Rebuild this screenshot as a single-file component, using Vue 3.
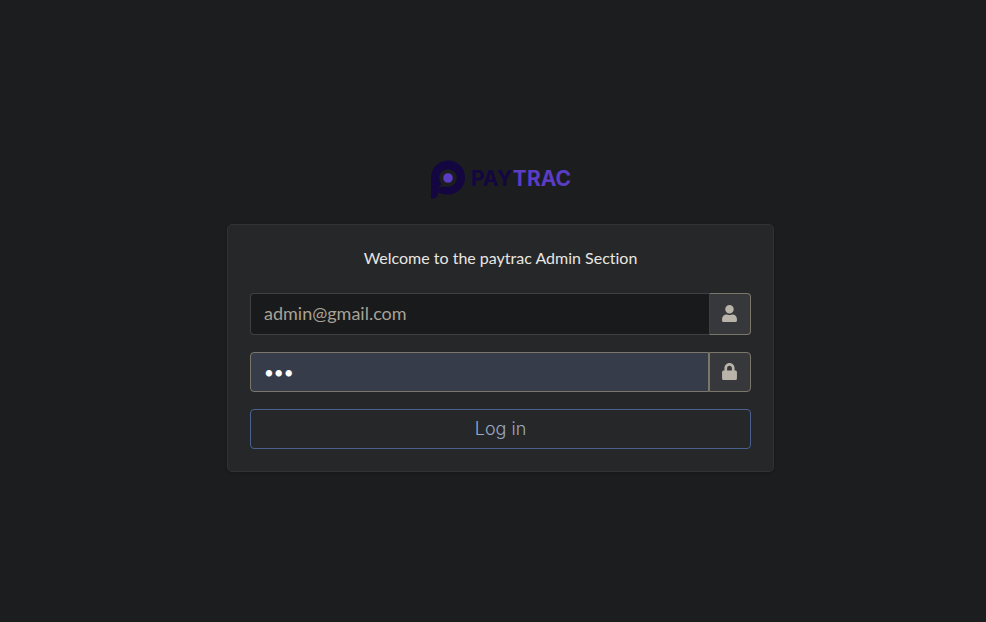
<script setup>
import { ref } from 'vue'

const email = ref('')
const password = ref('123')
</script>

<template>
  <main class="page">
    <div class="login">
      <a class="brand" href="#" aria-label="Paytrac">
        <svg class="logo" viewBox="0 0 140 40" width="140" height="40" aria-hidden="true">
          <path class="ink" fill-rule="evenodd" d="M0 39V18A17 17 0 1 1 17 34.500Q12 34.500 8.500 33Q7 32.500 7 34Q6.500 38.500 0 39ZM7.500 28.500Q9 26.500 12 26.800H17A8.800 8.800 0 1 0 8.200 18Q8.200 21.500 10.500 24.500Q8 25.500 7.500 28.500Z" />
          <circle class="accent" cx="17" cy="18" r="4.800" />
          <text class="word ink" x="40" y="26">PAY</text>
          <text class="word accent" x="140" y="26" text-anchor="end">TRAC</text>
        </svg>
      </a>
      <section class="card">
        <p class="welcome">Welcome to the paytrac Admin Section</p>
        <form class="form" @submit.prevent>
          <div class="group">
            <input v-model="email" class="field" type="email" placeholder="admin@gmail.com" aria-label="Email" />
            <span class="addon">
              <svg class="icon" viewBox="0 0 448 512" aria-hidden="true">
                <path d="M224 256c70.700 0 128-57.300 128-128S294.700 0 224 0 96 57.300 96 128s57.300 128 128 128zm89.600 32h-16.700c-22.200 10.200-46.900 16-72.900 16s-50.600-5.800-72.900-16h-16.700C60.200 288 0 348.200 0 422.400V464c0 26.500 21.500 48 48 48h352c26.500 0 48-21.500 48-48v-41.600c0-74.200-60.200-134.400-134.400-134.400z" />
              </svg>
            </span>
          </div>
          <div class="group">
            <input v-model="password" class="field filled" type="password" aria-label="Password" />
            <span class="addon joined">
              <svg class="icon" viewBox="0 0 448 512" aria-hidden="true">
                <path d="M400 224h-24v-72C376 68.200 307.800 0 224 0S72 68.200 72 152v72H48c-26.500 0-48 21.500-48 48v192c0 26.500 21.500 48 48 48h352c26.500 0 48-21.500 48-48V272c0-26.500-21.500-48-48-48zm-104 0H152v-72c0-39.700 32.300-72 72-72s72 32.300 72 72v72z" />
              </svg>
            </span>
          </div>
          <button class="submit" type="submit">Log in</button>
        </form>
      </section>
    </div>
  </main>
</template>

<style>
body {
  background: #1c1d1e;
}
</style>

<style scoped>
.page {
  box-sizing: border-box;
  min-height: 100vh;
  padding: 10px 0 0 15px;
  display: flex;
  align-items: center;
  justify-content: center;
  background: #1c1d1e;
  font-family: Lato, "Liberation Sans", sans-serif;
}
.login {
  width: 100%;
  max-width: 547px;
}
.brand {
  display: flex;
  justify-content: center;
  margin-bottom: 24px;
}
.logo {
  display: block;
}
.ink {
  fill: #140640;
}
.accent {
  fill: #5b3cc4;
}
.word {
  font: 700 21px Inter, sans-serif;
}
.card {
  padding: 22px;
  border: 1px solid #303234;
  border-radius: 5px;
  background: #262728;
  box-shadow: 0 1px 3px rgba(0, 0, 0, 0.2);
}
.welcome {
  margin: 0 0 24px;
  color: #e8e6e3;
  font-size: 16px;
  font-variant-ligatures: none;
  line-height: 22px;
  text-align: center;
}
.form {
  display: flex;
  flex-direction: column;
  gap: 17px;
}
.group {
  display: flex;
}
.field {
  box-sizing: border-box;
  flex: 1;
  min-width: 0;
  height: 42px;
  padding: 0 13px 2px;
  border: 1px solid #3e4144;
  border-right: 0;
  border-radius: 4px 0 0 4px;
  outline: 0;
  background: #191a1b;
  color: #fff;
  font: 18px Lato, sans-serif;
}
.field::placeholder {
  color: #a8a297;
  opacity: 1;
}
.filled {
  height: 40px;
  padding-bottom: 0;
  border: 1px solid #7b766a;
  background: #373c4a;
  font-size: 17px;
}
.addon {
  box-sizing: border-box;
  width: 42px;
  display: flex;
  align-items: center;
  justify-content: center;
  padding: 0 2px 2px 0;
  border: 1px solid #7b766a;
  border-left-color: #3e4144;
  border-radius: 0 4px 4px 0;
  background: #37383b;
}
.joined {
  border-left-color: #7b766a;
}
.icon {
  width: 15px;
  height: 17px;
  fill: #b9b3aa;
}
.submit {
  height: 40px;
  padding: 0 12px 2px;
  border: 1px solid #4a618f;
  border-radius: 4px;
  background: transparent;
  color: #98a9c6;
  font: 300 18px Inter, sans-serif;
  cursor: pointer;
}
</style>
